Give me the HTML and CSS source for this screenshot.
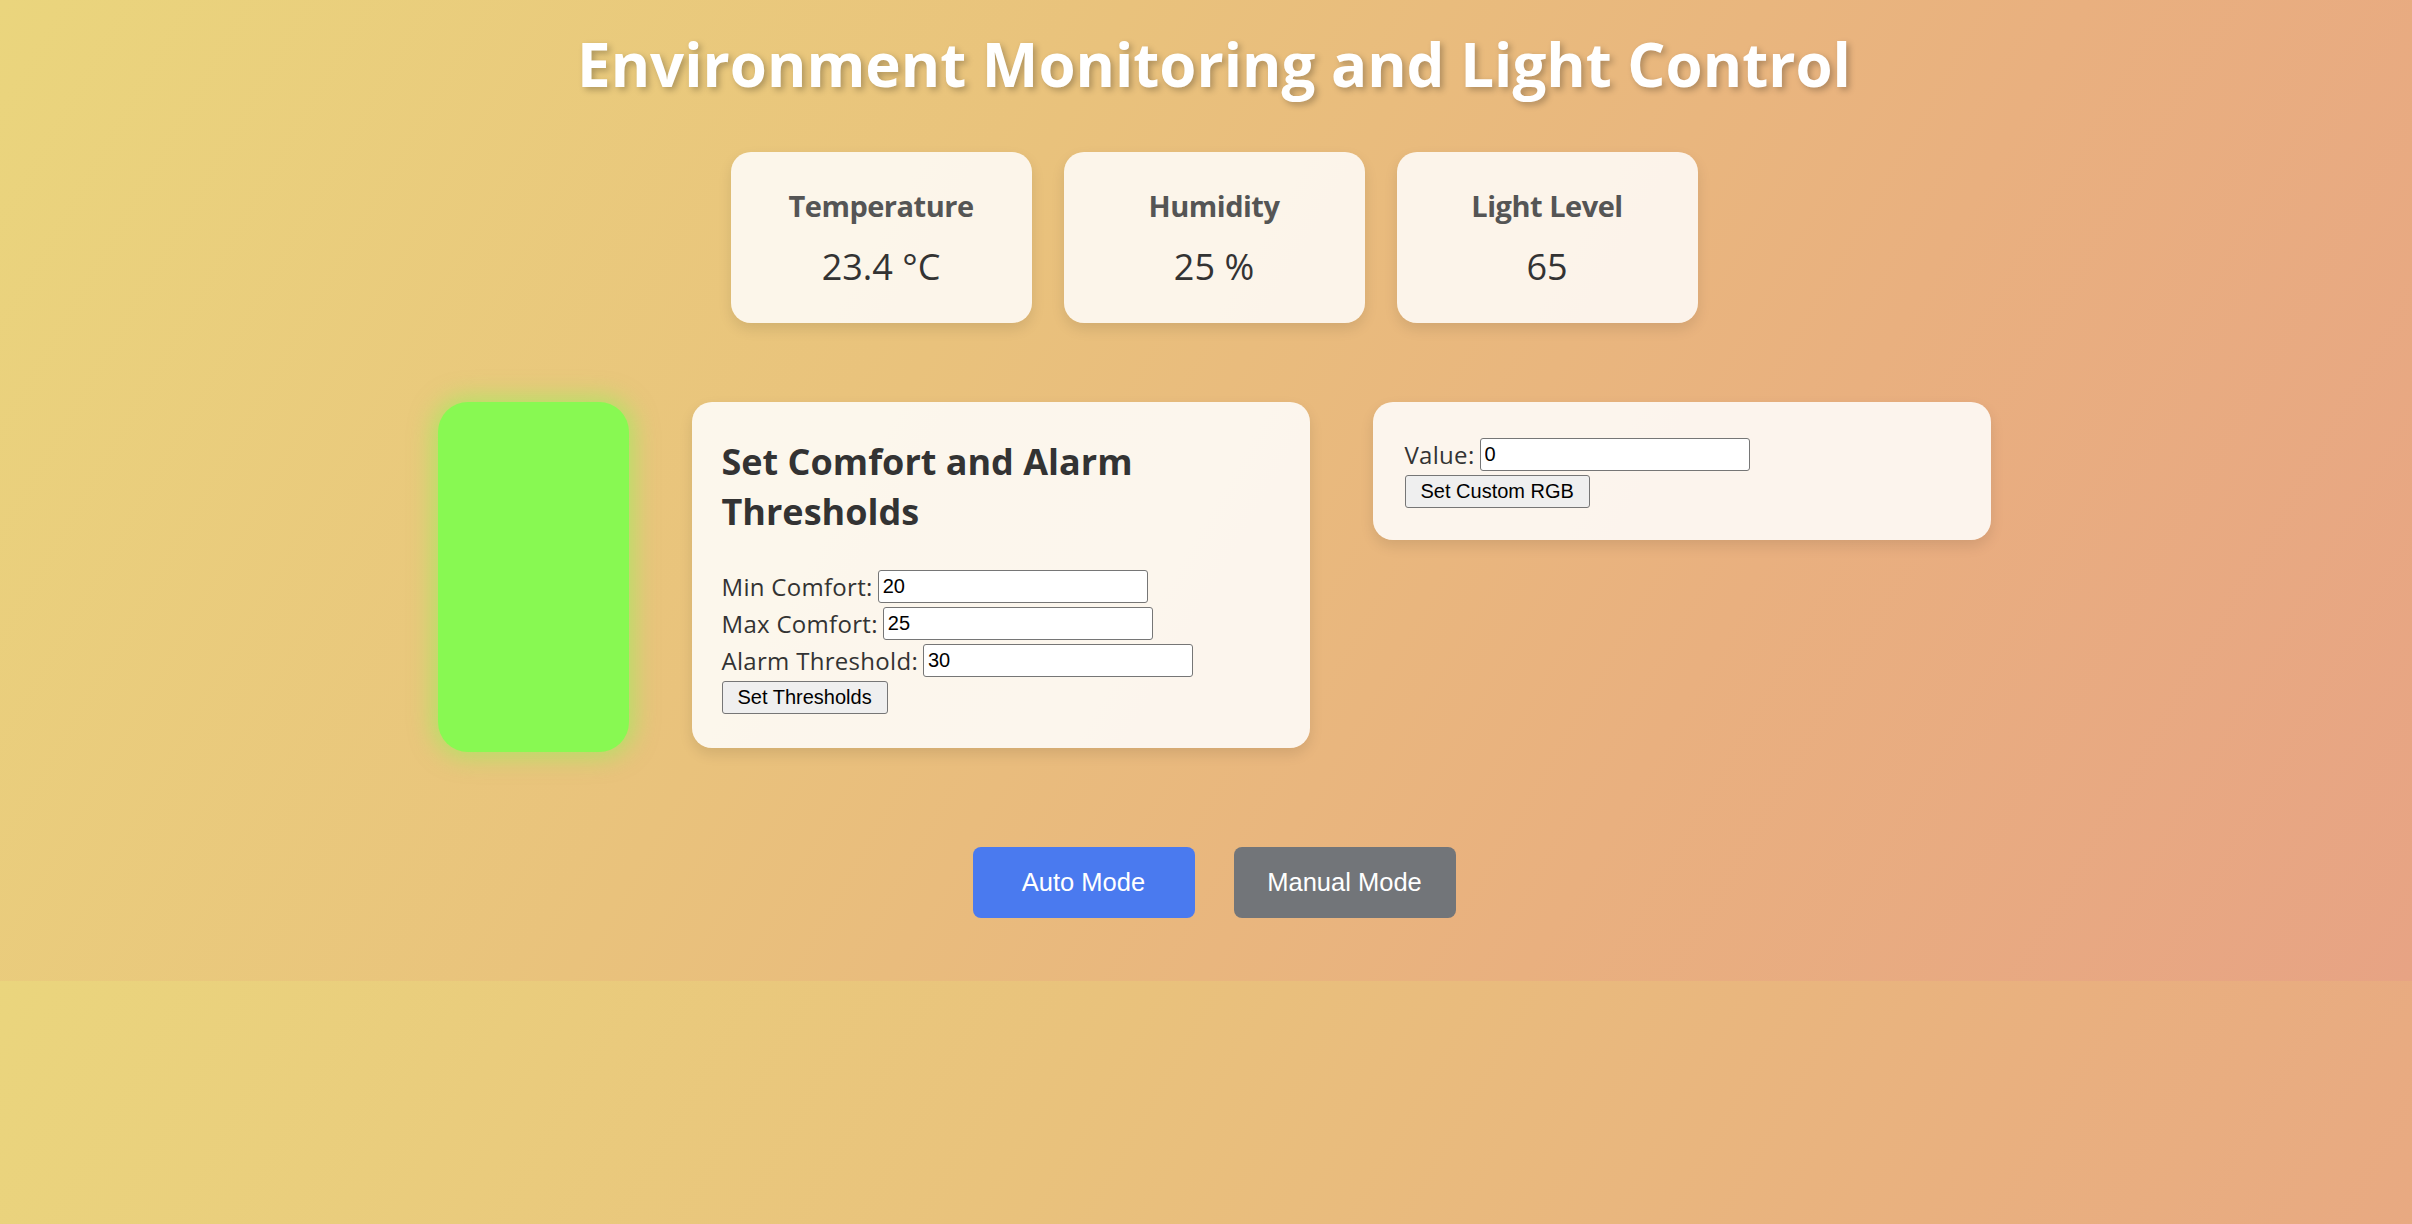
FILE: index.html
```html
<!DOCTYPE html>
<html lang="en">
<head>
<meta charset="utf-8">
<title>Environment Monitoring and Light Control</title>
<link rel="stylesheet" href="styles.css">
</head>
<body>
  <h1 class="title">Environment Monitoring and Light Control</h1>

  <section class="sensors">
    <div class="sensor-card">
      <h3 class="sensor-name">Temperature</h3>
      <div class="sensor-value">23.4 °C</div>
    </div>
    <div class="sensor-card">
      <h3 class="sensor-name">Humidity</h3>
      <div class="sensor-value">25 %</div>
    </div>
    <div class="sensor-card">
      <h3 class="sensor-name">Light Level</h3>
      <div class="sensor-value">65</div>
    </div>
  </section>

  <section class="controls">
    <div class="light"></div>

    <div class="panel panel-thresholds">
      <h2 class="panel-title">Set Comfort and Alarm Thresholds</h2>
      <div class="row"><label class="label">Min Comfort:</label><input class="field" type="text" value="20"></div>
      <div class="row"><label class="label">Max Comfort:</label><input class="field" type="text" value="25"></div>
      <div class="row"><label class="label">Alarm Threshold:</label><input class="field" type="text" value="30"></div>
      <div class="row"><button class="btn">Set Thresholds</button></div>
    </div>

    <div class="panel panel-rgb">
      <div class="row"><label class="label">Value:</label><input class="field" type="text" value="0"></div>
      <div class="row"><button class="btn">Set Custom RGB</button></div>
    </div>
  </section>

  <section class="modes">
    <button class="mode-btn mode-auto">Auto Mode</button>
    <button class="mode-btn mode-manual">Manual Mode</button>
  </section>
</body>
</html>
```

FILE: styles.css
```css
html {
  margin: 0;
  background: linear-gradient(120deg, #ead57d 0%, #e9c27c 38%, #e9b07f 70%, #e7a384 100%) 0 0 / 100% 981px repeat;
}

body {
  margin: 0;
  padding: 25px 0 63px 16px;
  font-family: "Open Sans", "Noto Sans", sans-serif;
  color: #333;
}

.title {
  margin: 0 0 49px;
  text-align: center;
  font-size: 60px;
  line-height: 78px;
  font-weight: 700;
  color: #fff;
  text-shadow: 3px 3px 6px rgba(0, 0, 0, 0.25);
}

.sensors {
  display: flex;
  justify-content: center;
  gap: 32px;
  margin-bottom: 79px;
}

.sensor-card {
  width: 301px;
  height: 171px;
  box-sizing: border-box;
  padding-top: 33px;
  text-align: center;
  border-radius: 20px;
  background: rgba(255, 255, 255, 0.84);
  box-shadow: 0 6px 14px rgba(0, 0, 0, 0.1);
}

.sensor-name {
  margin: 0 0 15px;
  font-size: 29px;
  line-height: 42px;
  font-weight: 700;
  letter-spacing: -0.5px;
  color: #555;
}

.sensor-value {
  font-size: 36px;
  line-height: 50px;
  color: #333;
}

.controls {
  display: flex;
  justify-content: center;
  align-items: flex-start;
  gap: 63px;
  margin-bottom: 95px;
}

.light {
  width: 191px;
  height: 350px;
  border-radius: 30px;
  background: #88f952;
  box-shadow: 0 0 22px 6px rgba(136, 249, 82, 0.5);
}

.panel {
  width: 618px;
  box-sizing: border-box;
  padding: 30px 30px;
  border-radius: 20px;
  background: rgba(255, 255, 255, 0.86);
  box-shadow: 0 6px 14px rgba(0, 0, 0, 0.1);
}

.panel-thresholds {
  height: 346px;
}

.panel-rgb {
  padding-top: 36px;
  padding-left: 32px;
  height: 138px;
}

.panel-title {
  margin: 5px 0 33px;
  font-size: 36px;
  line-height: 50px;
  font-weight: 700;
  color: #333;
}

.row {
  display: flex;
  align-items: center;
  gap: 5px;
  height: 33px;
  margin-bottom: 4px;
}

.label {
  font-size: 24px;
  letter-spacing: 0.3px;
  color: #333;
}

.field {
  box-sizing: border-box;
  width: 270px;
  height: 33px;
  padding: 1px 4px;
  font-family: "Liberation Sans", Arial, sans-serif;
  font-size: 20px;
  color: #000;
  background: #fff;
  border: 1.5px solid #767676;
  border-radius: 3px;
}

.btn {
  box-sizing: border-box;
  height: 33px;
  padding: 1px 15px;
  font-family: "Liberation Sans", Arial, sans-serif;
  font-size: 20px;
  color: #000;
  background: #efefef;
  border: 1.5px solid #767676;
  border-radius: 3px;
}

.modes {
  display: flex;
  justify-content: center;
  gap: 39px;
}

.mode-btn {
  width: 222px;
  height: 71px;
  border: none;
  border-radius: 8px;
  font-family: "Liberation Sans", Arial, sans-serif;
  font-size: 25.5px;
  color: #fff;
}

.mode-auto {
  background: #4a7aef;
}

.mode-manual {
  background: #727579;
}
```
